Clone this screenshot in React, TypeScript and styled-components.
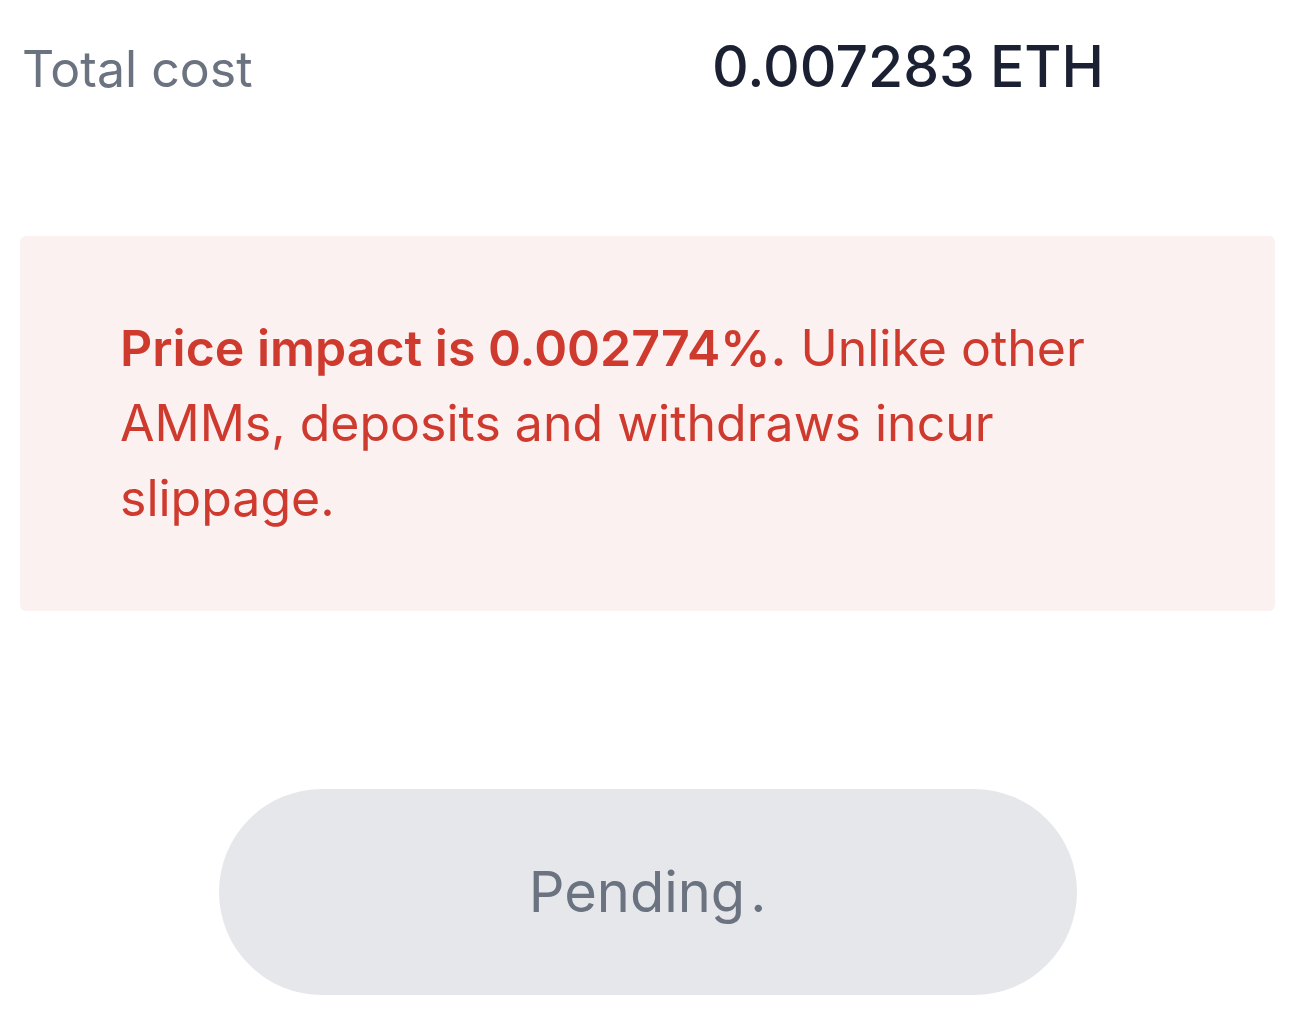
import React, { FC } from "react";
import styled, { createGlobalStyle } from "styled-components";

const Color = {
  Label: "#6b7280",
  Value: "#1b2132",
  Danger: "#cf3a2f",
  DangerBg: "#fbf1f0",
  Muted: "#e5e7eb",
};

const GlobalStyle = createGlobalStyle`
  html, body {
    margin: 0;
    padding: 0;
    background: #ffffff;
  }
  body {
    font-family: Inter, "Noto Sans", "Liberation Sans", sans-serif;
    -webkit-font-smoothing: antialiased;
  }
`;

const Page = styled.main`
  display: flex;
  flex-direction: column;
  padding: 29px 19px 0 20px;
`;

const CostRow = styled.div`
  display: grid;
  grid-template-columns: 690px 1fr;
  align-items: baseline;
  padding-left: 2px;
`;

const CostLabel = styled.span`
  font-size: 50px;
  line-height: 75px;
  color: ${Color.Label};
`;

const CostValue = styled.span`
  font-size: 57px;
  line-height: 75px;
  font-weight: 500;
  color: ${Color.Value};
`;

const Alert = styled.div`
  margin-top: 129px;
  padding: 75px 100px;
  background: ${Color.DangerBg};
  border-radius: 6px;
  color: ${Color.Danger};
  font-size: 50px;
  line-height: 75px;

  strong {
    font-weight: 600;
  }
`;

const Actions = styled.div`
  display: flex;
  justify-content: center;
  margin-top: 178px;
`;

const PillButton = styled.button`
  width: 858px;
  height: 206px;
  border: none;
  border-radius: 103px;
  background: ${Color.Muted};
  color: ${Color.Label};
  font-family: inherit;
  font-size: 56px;
  font-weight: 400;
  cursor: not-allowed;
`;

const Dots = styled.span`
  margin-left: 5px;
`;

interface CostProps {
  label: string;
  value: string;
}

const Cost: FC<CostProps> = ({ label, value }) => (
  <CostRow>
    <CostLabel>{label}</CostLabel>
    <CostValue>{value}</CostValue>
  </CostRow>
);

const App: FC = () => {
  return (
    <>
      <GlobalStyle />
      <Page>
        <Cost label="Total cost" value="0.007283 ETH" />
        <Alert>
          <strong>Price impact is 0.002774%.</strong> Unlike other AMMs, deposits and
          withdraws incur slippage.
        </Alert>
        <Actions>
          <PillButton disabled>
            Pending<Dots>.</Dots>
          </PillButton>
        </Actions>
      </Page>
    </>
  );
};

export default App;
